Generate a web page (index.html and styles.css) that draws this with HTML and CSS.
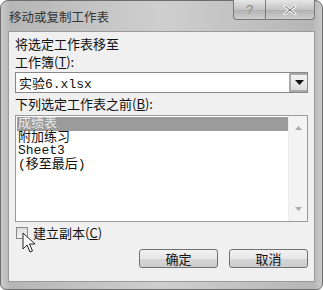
FILE: index.html
```html
<!DOCTYPE html>
<html lang="zh-CN">
<head>
    <meta charset="UTF-8">
    <title>移动或复制工作表</title>
    <link rel="stylesheet" href="styles.css">
</head>
<body>

<div class="window">
    <div class="title-bar">
        <span class="title">移动或复制工作表</span>
        <div class="controls">
            <span class="ctl help">?</span>
            <span class="ctl close">
                <svg width="14" height="10" viewBox="0 0 14 10"><path d="M2 1 L12 9 M12 1 L2 9" stroke="#f4f4f4" stroke-width="3" stroke-linecap="round"/><path d="M2 1 L12 9 M12 1 L2 9" stroke="#666" stroke-width="1" fill="none"/></svg>
            </span>
        </div>
    </div>

    <div class="client">
        <p class="label first">将选定工作表移至</p>
        <p class="label">工作簿(<u>T</u>):</p>
        <div class="combo">
            <span class="combo-value">实验6.xlsx</span>
            <span class="combo-btn"><svg width="9" height="5" viewBox="0 0 9 5"><path d="M0 0 H9 L4.5 5 Z" fill="#111"/></svg></span>
        </div>
        <p class="label">下列选定工作表之前(<u>B</u>):</p>
        <div class="listbox">
            <ul class="items">
                <li class="selected">成绩表</li>
                <li>附加练习</li>
                <li>Sheet3</li>
                <li>(移至最后)</li>
            </ul>
            <div class="scrollbar">
                <svg width="7" height="4" viewBox="0 0 7 4"><path d="M0 4 H7 L3.5 0 Z" fill="#aaa"/></svg>
                <svg width="7" height="4" viewBox="0 0 7 4"><path d="M0 0 H7 L3.5 4 Z" fill="#aaa"/></svg>
            </div>
        </div>
        <label class="copy">
            <span class="check"></span>
            <span>建立副本(<u>C</u>)</span>
            <svg class="cursor" width="14" height="22" viewBox="0 0 14 22"><path d="M1 1 V17 L5 13 L8 20 L10.5 19 L7.5 12 L13 12 Z" fill="#fff" stroke="#222" stroke-width="1" stroke-linejoin="round"/></svg>
        </label>
        <div class="actions">
            <button class="btn">确定</button>
            <button class="btn">取消</button>
        </div>
    </div>
</div>

</body>
</html>
```

FILE: styles.css
```css
* { box-sizing: border-box; }
:root {
    --frame: #bdbdbd;
    --edge: #6e6e6e;
    --line: #9a9a9a;
    --face: #f0f0f0;
}
body {
    margin: 0px;
    background: #fff;
    font-family: "Noto Sans CJK SC", "Liberation Sans", sans-serif;
    color: #111;
}
.window {
    width: 323px;
    height: 290px;
    padding: 0 7px 7px 7px;
    border: 1px solid var(--edge);
    border-radius: 8px 8px 6px 6px;
    background: linear-gradient(to right, #c9c9c9, #b6b6b6 3%, #cfcfcf 50%, #b6b6b6 97%, #c9c9c9);
    display: flex;
    flex-direction: column;
}

.title-bar {
    height: 30px;
    display: flex;
    justify-content: space-between;
    align-items: flex-start;
}
.title {
    margin-top: 6px;
    margin-left: 1px;
    font-size: 12.5px;
    color: #333;
}
.controls {
    display: flex;
    margin-top: -1px;
}
.ctl {
    height: 20px;
    display: flex;
    align-items: center;
    justify-content: center;
    border: 1px solid #777;
    border-top: none;
    background: linear-gradient(#e6e6e6, #c4c4c4 50%, #b0b0b0 51%, #cfcfcf);
}
.help {
    width: 32px;
    border-radius: 0 0 0 4px;
    border-right: none;
    font-family: "Liberation Sans", sans-serif;
    font-size: 13px;
    color: #888;
}
.close {
    width: 50px;
    border-radius: 0 0 4px 0;
}

.client {
    flex: 1;
    background: var(--face);
    border: 1px solid var(--line);
    padding: 0 6px 0 6px;
}
.label {
    margin: 0;
    font-size: 13px;
    line-height: 16px;
    height: 16px;
}
.label u { text-decoration-thickness: 1px; }
.label.first { margin-top: 4px; margin-bottom: 2px; }

.combo {
    margin-top: 2px;
    margin-bottom: 3px;
    height: 21px;
    background: #fff;
    border: 1px solid #888;
    display: flex;
    align-items: center;
    justify-content: space-between;
}
.combo-value {
    padding-left: 3px;
    font-family: "Liberation Mono", "Noto Sans CJK SC", monospace;
    font-size: 13px;
}
.combo-btn {
    width: 18px;
    height: 19px;
    border: 2px solid #aaa;
    border-right: none;
    background: linear-gradient(#f4f4f4, #dcdcdc);
    display: flex;
    align-items: center;
    justify-content: center;
}

.listbox {
    margin-top: 3px;
    height: 107px;
    background: #fff;
    border: 1px solid var(--line);
    display: flex;
}
.items {
    flex: 1;
    list-style: none;
    margin: 0;
    padding: 1px 0 0 1px;
}
.items li {
    height: 13.5px;
    line-height: 13.5px;
    padding-left: 1px;
    font-family: "Liberation Mono", "Noto Sans CJK SC", monospace;
    font-size: 13px;
}
.items li.selected {
    background: #9b9b9b;
    color: #e8e8e8;
}
.scrollbar {
    width: 19px;
    background: #f3f3f3;
    border-left: 1px solid #ececec;
    display: flex;
    flex-direction: column;
    align-items: center;
    justify-content: space-between;
    padding: 10px 0 10px 0;
}

.copy {
    margin-top: 4px;
    height: 13px;
    display: flex;
    align-items: center;
    gap: 5px;
    font-size: 13px;
    padding-left: 1px;
    position: relative;
}
.check {
    width: 12px;
    height: 12px;
    border: 1px solid #8a8a8a;
    background: linear-gradient(#dcdcdc, #f4f4f4);
}
.cursor {
    position: absolute;
    left: 7px;
    top: 6px;
}

.actions {
    margin-top: 10px;
    display: flex;
    justify-content: flex-end;
    gap: 11px;
    padding-right: 0px;
}
.btn {
    width: 79px;
    height: 19px;
    padding: 0;
    border: 1px solid #707070;
    border-radius: 3px;
    background: linear-gradient(#f2f2f2, #e6e6e6 50%, #d6d6d6 51%, #cdcdcd);
    font-family: "Noto Sans CJK SC", sans-serif;
    font-size: 13px;
    line-height: 17px;
    color: #111;
}
```
